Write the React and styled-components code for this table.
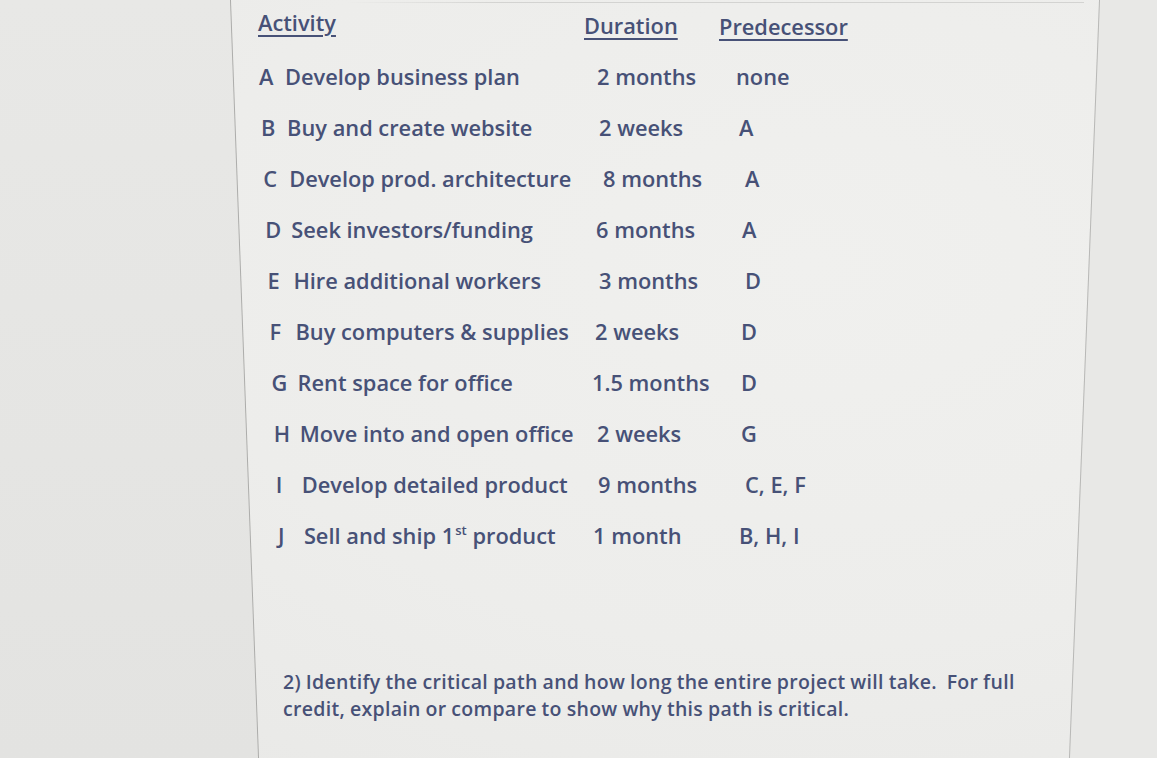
import React from "react";
import styled, { createGlobalStyle } from "styled-components";

const Global = createGlobalStyle`
  html, body { margin: 0; padding: 0; background: #ebebe9; }
  body { font-family: "Open Sans", "Lato", sans-serif; }
`;

const Page = styled.div`
  width: 1157px;
  height: 758px;
  display: flex;
  overflow: hidden;
  background: radial-gradient(ellipse at 70% 35%, #f0f0ee 0%, #ededeb 55%, #e8e8e6 100%);
`;

const LeftMargin = styled.div`
  flex: none;
  width: 274px;
  margin-left: -30px;
  height: 100%;
  background: linear-gradient(180deg, #e8e8e6 0%, #e5e5e3 60%, #e3e3e1 100%);
  border-right: 1.5px solid #acacaa;
  transform: skewX(2.12deg);
`;

const RightStrip = styled.div`
  flex: none;
  width: 102px;
  margin-right: -30px;
  height: 100%;
  background: #e8e8e6;
  border-left: 1.5px solid #b8b8b6;
  transform: skewX(-2.27deg);
`;

const Paper = styled.div`
  flex: 1;
  display: flex;
  flex-direction: column;
  color: #475177;
  background: linear-gradient(90deg, transparent 0%, transparent 12%, #d3d3d1 30%, #d3d3d1 100%) 0 2px / 100% 1px no-repeat;
`;

const Table = styled.div`
  display: flex;
  flex-direction: column;
`;

const Row = styled.div`
  display: grid;
  grid-template-columns: 339px 135px 1fr;
  align-items: center;
  height: 51px;
  font-weight: 600;
  font-size: 21.8px;
`;

const Cell = styled.div`
  padding-left: ${(p) => p.$pad || 0}px;
  white-space: nowrap;
`;

const Head = styled.span`
  text-decoration: underline;
  text-decoration-thickness: 1.5px;
  text-underline-offset: 4px;
  position: relative;
  top: ${(p) => p.$dy || 0}px;
`;

const Letter = styled.span`
  display: inline-block;
  width: 26px;
`;

const Sup = styled.sup`
  font-size: 0.6em;
  line-height: 0;
  vertical-align: 0.7em;
  margin-left: 1px;
`;

const Question = styled.div`
  margin: 108px 0 0 38px;
  font-size: 19.5px;
  font-weight: 600;
  letter-spacing: 0.3px;
  word-spacing: -0.5px;
  white-space: nowrap;
`;

const QLine = styled.div`
  height: 26.6px;
  line-height: 26.6px;
`;

const rows = [
  ["A", "Develop business plan", "2 months", "none", 13, 0],
  ["B", "Buy and create website", "2 weeks", "A", 15, 3],
  ["C", "Develop prod. architecture", "8 months", "A", 19, 9],
  ["D", "Seek investors/funding", "6 months", "A", 12, 6],
  ["E", "Hire additional workers", "3 months", "D", 15, 9],
  ["F", "Buy computers & supplies", "2 weeks", "D", 11, 5],
  ["G", "Rent space for office", "1.5 months", "D", 8, 5],
  ["H", "Move into and open office", "2 weeks", "G", 13, 5],
  ["I", "Develop detailed product", "9 months", "C, E, F", 14, 9],
  ["J", "Sell and ship", "1 month", "B, H, I", 9, 3],
];

export default function App() {
  return (
    <>
      <Global />
      <Page>
        <LeftMargin />
        <Paper>
          <Table>
            <Row>
              <Cell $pad={13}>
                <Head $dy={-3}>Activity</Head>
              </Cell>
              <Cell>
                <Head>Duration</Head>
              </Cell>
              <Cell>
                <Head $dy={1}>Predecessor</Head>
              </Cell>
            </Row>
            {rows.map(([l, name, dur, pred, dpad, ppad], i) => (
              <Row key={l}>
                <Cell $pad={14 + i * 2.1}>
                  <Letter>{l}</Letter>
                  {name}
                  {l === "J" && (
                    <>
                      {" "}1<Sup>st</Sup> product
                    </>
                  )}
                </Cell>
                <Cell $pad={dpad}>{dur}</Cell>
                <Cell $pad={17 + ppad}>{pred}</Cell>
              </Row>
            ))}
          </Table>
          <Question>
            <QLine>
              2) Identify the critical path and how long the entire project will take.&nbsp; For full
            </QLine>
            <QLine>credit, explain or compare to show why this path is critical.</QLine>
          </Question>
        </Paper>
        <RightStrip />
      </Page>
    </>
  );
}
